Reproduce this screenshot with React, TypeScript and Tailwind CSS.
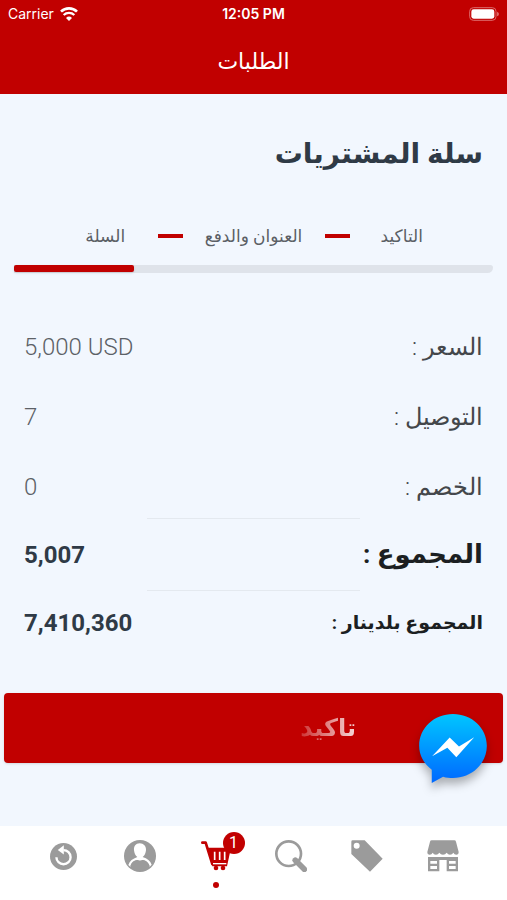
import type { ReactNode } from "react";

const steps = ["التاكيد", "العنوان والدفع", "السلة"];

const prices = [
  { label: "السعر :", value: "5,000 USD" },
  { label: "التوصيل :", value: "7" },
  { label: "الخصم :", value: "0" },
];

function WifiIcon() {
  return (
    <svg viewBox="0 0 54 42" className="h-[14px] w-[18px]" fill="none" aria-hidden="true">
      <path d="M3 14a34 34 0 0 1 48 0" stroke="#fff" strokeWidth="8" />
      <path d="M11 24a23 23 0 0 1 32 0" stroke="#fff" strokeWidth="7" />
      <path d="M27 42l-9-9a13 13 0 0 1 18 0z" fill="#fff" />
    </svg>
  );
}

function BatteryIcon() {
  return (
    <svg viewBox="0 0 90 42" className="h-[14px] w-[30px]" fill="none" aria-hidden="true">
      <rect x="2" y="2" width="79" height="38" rx="11" stroke="#dc6a6a" strokeWidth="3" />
      <rect x="7" y="7" width="69" height="28" rx="7" fill="#fff" />
      <path d="M84 14q6 2 6 7t-6 7z" fill="#dc6a6a" />
    </svg>
  );
}

function RefreshIcon() {
  return (
    <svg viewBox="0 0 80 80" className="size-[27px]" aria-hidden="true">
      <circle cx="40" cy="40" r="40" fill="#9b9b9b" />
      <path d="M19 42a21 21 0 1 0 21-21" fill="none" stroke="#fff" strokeWidth="7" />
      <path d="M23 21L41 7v27z" fill="#fff" />
    </svg>
  );
}

function ProfileIcon() {
  return (
    <svg viewBox="0 0 96 96" className="size-8" aria-hidden="true">
      <circle cx="48" cy="48" r="48" fill="#9b9b9b" />
      <path
        d="M47 10c-12 0-18 9-17 21 1 9 4 16 10 20-14 5-23 12-27 24l6 5c4-12 11-18 21-20 5 3 11 3 16 0 10 2 17 8 21 20l6-6c-4-12-13-18-27-23 6-4 9-11 10-20 1-12-7-21-19-21z"
        fill="#fff"
      />
      <path d="M19 77c4-11 11-16 21-17 5 3 11 3 16 0 10 1 17 7 21 17-16 20-43 20-58 0z" fill="#9b9b9b" />
    </svg>
  );
}

function CartIcon() {
  return (
    <svg viewBox="0 0 90 90" className="size-[30px]" aria-hidden="true">
      <path
        d="M4 5h10l20 64"
        fill="none"
        stroke="#c10000"
        strokeWidth="8"
        strokeLinecap="round"
        strokeLinejoin="round"
      />
      <path d="M19 20h71L78 76H34z" fill="#c10000" />
      <path d="M41 32v25M56 32v25M71 32v25" stroke="#fff" strokeWidth="5" />
      <path d="M36 68h40" stroke="#fff" strokeWidth="4" />
      <circle cx="45" cy="81" r="7" fill="#c10000" />
      <circle cx="66" cy="81" r="7" fill="#c10000" />
    </svg>
  );
}

function SearchIcon() {
  return (
    <svg viewBox="0 0 96 96" className="size-8" fill="none" stroke="#9b9b9b" aria-hidden="true">
      <circle cx="41" cy="41" r="37" strokeWidth="8" />
      <path d="M61 61l27 27" strokeWidth="17" strokeLinecap="round" />
    </svg>
  );
}

function TagIcon() {
  return (
    <svg viewBox="0 0 96 96" className="size-8" aria-hidden="true">
      <path
        d="M5 1h36l54 55-38 39L1 42V5q0-4 4-4zm12 7a9 9 0 1 0 0 18 9 9 0 0 0 0-18z"
        fill="#9b9b9b"
        fillRule="evenodd"
      />
    </svg>
  );
}

function StoreIcon() {
  return (
    <svg viewBox="0 0 96 96" className="size-8" aria-hidden="true">
      <path
        d="M14 1h68q4 0 5 4l8 31q0 8-7 8-6 0-9-6-3 6-10 6-6 0-10-6-4 6-11 6t-11-6q-4 6-10 6-7 0-10-6-3 6-9 6-7 0-7-8L9 5q1-4 5-4z"
        fill="#9b9b9b"
      />
      <path
        d="M3 51h90v43H59V60H37v34H3zm7 12v8h20v-8zm0 15v9h20v-9zm56-15v8h20v-8zm0 15v9h20v-9z"
        fill="#9b9b9b"
        fillRule="evenodd"
      />
    </svg>
  );
}

function MessengerIcon() {
  return (
    <svg viewBox="0 0 204 208" className="h-[69px] w-[68px]" aria-hidden="true">
      <defs>
        <linearGradient id="messenger" x1="0" y1="0" x2="0" y2="1">
          <stop offset="0" stopColor="#00c6ff" />
          <stop offset="1" stopColor="#0068ff" />
        </linearGradient>
      </defs>
      <path
        d="M102 0C45 0 0 42 0 96c0 29 14 54 38 72v40l34-19c10 3 20 4 30 4 57 0 102-43 102-97S159 0 102 0z"
        fill="url(#messenger)"
      />
      <path d="M39 127l53-56 28 27 46-28-54 60-27-28z" fill="#fff" />
    </svg>
  );
}

const tabs: { name: string; icon: ReactNode; badge?: string }[] = [
  { name: "السجل", icon: <RefreshIcon /> },
  { name: "الحساب", icon: <ProfileIcon /> },
  { name: "السلة", icon: <CartIcon />, badge: "1" },
  { name: "بحث", icon: <SearchIcon /> },
  { name: "العروض", icon: <TagIcon /> },
  { name: "المتجر", icon: <StoreIcon /> },
];

export default function App() {
  return (
    <div className="flex min-h-screen flex-col bg-[#f2f7fe] font-['Roboto','DejaVu_Sans',sans-serif] text-[#2f3a46]">
      <header className="h-[94px] bg-[#c10000] text-white">
        <div className="grid h-7 grid-cols-3 items-center px-2 font-['Inter',sans-serif] text-sm">
          <span className="flex items-center gap-1.5">
            Carrier
            <WifiIcon />
          </span>
          <span className="text-center font-semibold">12:05 PM</span>
          <span className="flex justify-end">
            <BatteryIcon />
          </span>
        </div>
        <h1 dir="rtl" className="pt-3.5 text-center text-[22px] leading-10">
          الطلبات
        </h1>
      </header>

      <main className="relative flex-1 pb-[63px]">
        <h2 dir="rtl" className="px-6 pt-10 text-[28px] leading-10 font-bold">
          سلة المشتريات
        </h2>

        <ol dir="rtl" className="mt-12 flex items-center px-[53px] text-[17px] leading-7 text-[#5b5f65]">
          <li className="flex-1 text-center">{steps[0]}</li>
          <li aria-hidden="true" className="h-1 w-[25px] bg-[#c10000]" />
          <li className="w-[142px] text-center whitespace-nowrap">{steps[1]}</li>
          <li aria-hidden="true" className="h-1 w-[25px] bg-[#c10000]" />
          <li className="flex-1 text-center">{steps[2]}</li>
        </ol>

        <div
          role="progressbar"
          aria-label="السلة"
          aria-valuenow={25}
          className="mx-[14px] mt-[15px] h-2 rounded-tr-sm rounded-br-lg bg-[#dfe3ea]"
        >
          <div className="h-[7px] w-[25%] rounded-xs bg-[#c10000] shadow-sm" />
        </div>

        <dl dir="rtl" className="mt-[43px]">
          <div className="flex flex-col gap-2 text-2xl font-light">
            {prices.map((row) => (
              <div key={row.label} className="flex h-[62px] items-center justify-between px-6">
                <dt className="text-[#44474b]">{row.label}</dt>
                <dd dir="ltr" className="text-[#5c6166]">
                  {row.value}
                </dd>
              </div>
            ))}
          </div>
          <div className="mx-auto w-[42%] border-t border-[#e4e9ef]" />
          <div className="flex h-[71px] items-center justify-between px-6 font-bold">
            <dt className="text-[26px] text-[#1c1f22]">المجموع :</dt>
            <dd dir="ltr" className="text-2xl">
              5,007
            </dd>
          </div>
          <div className="mx-auto w-[42%] border-t border-[#e4e9ef]" />
          <div className="flex h-16 items-center justify-between px-6 font-bold">
            <dt className="text-[19px] text-[#1c1f22]">المجموع بلدينار :</dt>
            <dd dir="ltr" className="text-2xl">
              7,410,360
            </dd>
          </div>
        </dl>

        <div className="mt-[38px] px-1">
          <button type="button" dir="rtl" className="h-[70px] w-full rounded-sm bg-[#c10000] shadow-sm">
            <span className="mx-auto block w-[205px] text-right">
              <span className="inline-block bg-linear-to-l from-white/85 to-white/20 bg-clip-text text-2xl font-bold text-transparent">
                تاكيد
              </span>
            </span>
          </button>
        </div>

        <button
          type="button"
          aria-label="Messenger"
          className="absolute right-5 bottom-[43px] drop-shadow-[0_6px_5px_rgba(0,0,0,0.3)]"
        >
          <MessengerIcon />
        </button>
      </main>

      <nav className="grid h-[74px] grid-cols-6 bg-white px-[26px]">
        {tabs.map((tab) => (
          <a key={tab.name} href="#" aria-label={tab.name} className="flex flex-col items-center pt-3.5">
            <span className="relative flex h-8 items-center">
              {tab.icon}
              {tab.badge && (
                <span className="absolute -top-2 -right-3.5 flex size-[22px] items-center justify-center rounded-full bg-[#c10000] text-base text-white">
                  {tab.badge}
                </span>
              )}
            </span>
            {tab.badge && <span className="mt-2.5 size-1.5 rounded-full bg-[#c10000]" />}
          </a>
        ))}
      </nav>
    </div>
  );
}
